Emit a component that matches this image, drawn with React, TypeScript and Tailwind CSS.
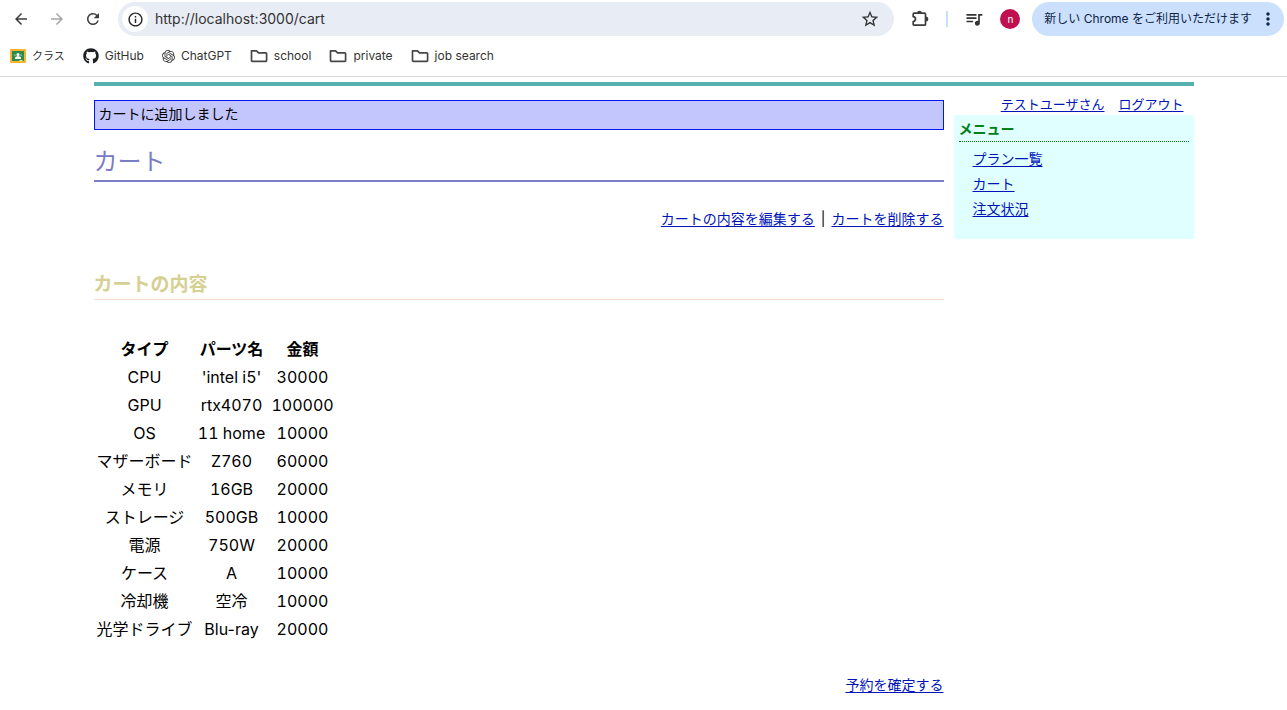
import React from "react";
import { FaGithub } from "react-icons/fa";
import { SiOpenai } from "react-icons/si";
import {
  MdArrowBack,
  MdArrowForward,
  MdInfoOutline,
  MdMoreVert,
  MdQueueMusic,
  MdRefresh,
  MdStarBorder,
} from "react-icons/md";

const parts: [string, string, string][] = [
  ["CPU", "'intel i5'", "30000"],
  ["GPU", "rtx4070", "100000"],
  ["OS", "11 home", "10000"],
  ["マザーボード", "Z760", "60000"],
  ["メモリ", "16GB", "20000"],
  ["ストレージ", "500GB", "10000"],
  ["電源", "750W", "20000"],
  ["ケース", "A", "10000"],
  ["冷却機", "空冷", "10000"],
  ["光学ドライブ", "Blu-ray", "20000"],
];

const menu = ["プラン一覧", "カート", "注文状況"];

function ClassroomIcon() {
  return (
    <svg width="16" height="16" viewBox="0 0 16 16" aria-hidden="true">
      <rect y="1" width="16" height="14" rx="1" fill="#f9b42d" />
      <rect x="2" y="3" width="12" height="10" fill="#2e8b4d" />
      <circle cx="8" cy="6.4" r="1.5" fill="#fff" />
      <circle cx="4.9" cy="7.2" r="0.9" fill="#7fc195" />
      <circle cx="11.1" cy="7.2" r="0.9" fill="#7fc195" />
      <path d="M5 11V10c0-1.2 1.700-1.700 3-1.700s3 .5 3 1.700v1z" fill="#fff" />
      <path d="M9.500 12h3v1h-3z" fill="#d5eadb" />
    </svg>
  );
}

function FolderIcon() {
  return (
    <svg width="18" height="16" viewBox="0 0 18 16" fill="none" stroke="#474747" strokeWidth="1.7" strokeLinejoin="round" aria-hidden="true">
      <path d="M1.500 2.800h5l2 2h7.300q.8 0 .8.8v7q0 .8-.8.8H2.300q-.8 0-.8-.8z" />
    </svg>
  );
}

function ExtensionIcon() {
  return (
    <svg width="20" height="20" viewBox="0 0 20 20" aria-hidden="true">
      <path
        d="M4.200 4.200H14.500q1 0 1 1v10q0 1-1 1H4.200q-1 0-1-1v-2.700c1.400-.2 2.300-1.100 2.300-2.400s-.9-2.200-2.300-2.400V5.200q0-1 1-1z"
        fill="none"
        stroke="#3c3c3c"
        strokeWidth="1.700"
        strokeLinejoin="round"
      />
      <path d="M7.200 4a2.300 2.300 0 0 1 4.600 0zM15.800 7.600a2.500 2.500 0 0 1 0 5z" fill="#3c3c3c" />
    </svg>
  );
}

function Bookmark({ icon, children }: { icon: React.ReactNode; children: React.ReactNode }) {
  return (
    <a href="#" className="flex items-center gap-1.5 whitespace-nowrap">
      {icon}
      {children}
    </a>
  );
}

function BrowserBar() {
  return (
    <header className="border-b border-[#dcdcdc] bg-white font-['Inter','Noto_Sans_CJK_JP',sans-serif] text-[#333]">
      <div className="flex items-center pt-0.5 pr-[3px]">
        <nav className="flex items-center gap-4.5 pr-4 pl-3 text-[#3c3c3c]">
          <button type="button" aria-label="戻る"><MdArrowBack size={18} /></button>
          <button type="button" aria-label="進む" className="text-[#a6a6a6]"><MdArrowForward size={18} /></button>
          <button type="button" aria-label="再読み込み"><MdRefresh size={18} /></button>
        </nav>
        <div className="flex h-[34px] flex-1 items-center rounded-full bg-[#e8ecf5] pr-3.5 pl-1">
          <button type="button" aria-label="サイト情報" className="flex size-[26px] items-center justify-center rounded-full bg-white text-[#222]">
            <MdInfoOutline size={17} />
          </button>
          <input
            aria-label="アドレス"
            defaultValue="http://localhost:3000/cart"
            className="min-w-0 flex-1 bg-transparent pl-[7px] text-[14px] leading-5 outline-none"
          />
          <button type="button" aria-label="ブックマークに追加"><MdStarBorder size={20} /></button>
        </div>
        <div className="flex items-center pr-3 pl-4">
          <button type="button" aria-label="拡張機能"><ExtensionIcon /></button>
          <span className="mx-4 h-4 w-0.5 bg-[#c9dffb]" />
          <button type="button" aria-label="メディア"><MdQueueMusic size={20} /></button>
          <button type="button" aria-label="プロフィール" className="ml-4 size-5 rounded-full bg-[#bf1150] text-[10px] leading-5 text-white">n</button>
        </div>
        <button type="button" className="flex h-[34px] items-center gap-1.5 rounded-full bg-[#cbe0fc] pr-1.5 pl-3 text-[12px] whitespace-nowrap text-[#0b2345]">
          新しい Chrome をご利用いただけます
          <MdMoreVert size={20} />
        </button>
      </div>
      <div className="flex h-10 items-center gap-4.5 px-2.5 text-[12px]">
        <Bookmark icon={<ClassroomIcon />}><span className="text-[11px]">クラス</span></Bookmark>
        <Bookmark icon={<FaGithub size={16} color="#1c2024" />}>GitHub</Bookmark>
        <Bookmark icon={<SiOpenai size={13} />}>ChatGPT</Bookmark>
        <Bookmark icon={<FolderIcon />}>school</Bookmark>
        <Bookmark icon={<FolderIcon />}>private</Bookmark>
        <Bookmark icon={<FolderIcon />}>job search</Bookmark>
      </div>
    </header>
  );
}

function TextLink({ children }: { children: string }) {
  return (
    <a href="#" className="text-[#0014b8] underline underline-offset-2">
      {children}
    </a>
  );
}

export default function App() {
  return (
    <div className="bg-white font-['Inter','Noto_Sans_CJK_JP',sans-serif] text-black">
      <BrowserBar />
      <div className="mx-auto mt-[5px] max-w-[1100px] border-t-4 border-[#56b0b0]">
        <div className="flex gap-2.5">
          <main className="min-w-0 flex-1 pt-3.5">
            <p className="border border-[#0018f0] bg-[#c3c5fd] px-1 pb-0.5 text-[14px] leading-[26px]">カートに追加しました</p>
            <h1 className="mt-3.5 border-b-2 border-[#7b7cc6] text-[24px] leading-9 text-[#7b7cc6]">カート</h1>
            <div className="mt-[23px] text-right text-[14px] leading-7">
              <TextLink>カートの内容を編集する</TextLink>
              <span className="mx-1.5">|</span>
              <TextLink>カートを削除する</TextLink>
            </div>
            <h2 className="mt-[38px] border-b border-[#f7dccd] text-[19px] leading-7 font-bold text-[#d6d093]">カートの内容</h2>
            <table className="mt-[34px] border-separate border-spacing-[2px] text-center text-[16px] leading-6">
              <thead>
                <tr>
                  <th className="w-[98px] p-px">タイプ</th>
                  <th className="w-[72px] p-px">パーツ名</th>
                  <th className="w-[66px] p-px">金額</th>
                </tr>
              </thead>
              <tbody>
                {parts.map(([type, name, price]) => (
                  <tr key={type}>
                    <td className="p-px">{type}</td>
                    <td className={/\d/.test(name) ? "p-px whitespace-nowrap tabular-nums" : "p-px whitespace-nowrap"}>{name}</td>
                    <td className="p-px tabular-nums">{price}</td>
                  </tr>
                ))}
              </tbody>
            </table>
            <p className="mt-[27px] text-right text-[14px] leading-7">
              <TextLink>予約を確定する</TextLink>
            </p>
          </main>
          <aside className="w-60 pt-2">
            <div className="flex justify-end gap-3.5 pr-2.5 text-[13px] leading-[21px]">
              <TextLink>テストユーザさん</TextLink>
              <TextLink>ログアウト</TextLink>
            </div>
            <nav className="bg-[#e0ffff] px-[5px] pt-0.5 pb-[18px] text-[14px]">
              <h2 className="border-b border-dotted border-[#007a1c] pb-px leading-[23px] font-bold text-[#008018]">メニュー</h2>
              <ul className="pt-1 pl-3.5 leading-[25px]">
                {menu.map((item) => (
                  <li key={item}><TextLink>{item}</TextLink></li>
                ))}
              </ul>
            </nav>
          </aside>
        </div>
      </div>
    </div>
  );
}
